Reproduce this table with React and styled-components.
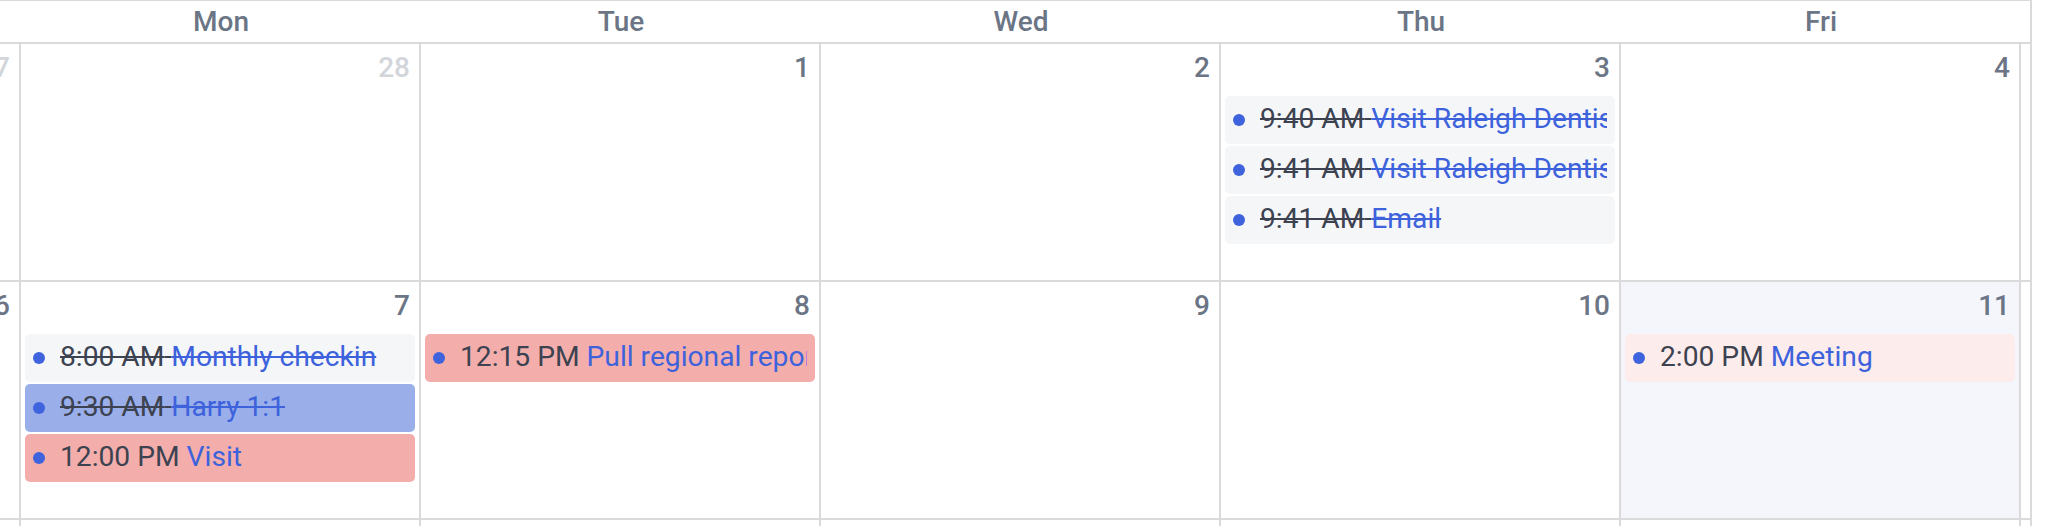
import styled, { createGlobalStyle } from "styled-components";

const GlobalStyle = createGlobalStyle`
    body {
        margin: 0;
        background: #ffffff;
        overflow: hidden;
        font-family: Roboto, "Liberation Sans", sans-serif;
    }
`;

const Frame = styled.div`
    width: 2032px;
    box-sizing: border-box;
    border-top: 1px solid #dadada;
    border-right: 2px solid #dadada;
    overflow: hidden;
`;

// the month grid is scrolled sideways: Sunday sits mostly off the left edge
const Board = styled.div`
    width: 2800px;
    margin-left: -379px;
`;

const HeaderRow = styled.div`
    display: grid;
    grid-template-columns: repeat(7, 400px);
    height: 43px;
    box-sizing: border-box;
    border-bottom: 2px solid #dadada;
`;

const HeadCell = styled.div`
    display: flex;
    align-items: center;
    justify-content: center;
    font-size: 28px;
    font-weight: 500;
    color: #6b7585;
`;

const WeekRow = styled.div`
    display: grid;
    grid-template-columns: repeat(7, 400px);
    height: 238px;
    box-sizing: border-box;
    border-bottom: 2px solid #dadada;
`;

const DayCell = styled.div`
    box-sizing: border-box;
    border-right: 2px solid #dadada;
    padding: 7px 4px 0;
    background: ${({ $today }) => ($today ? "#f4f6fc" : "transparent")};
    display: flex;
    flex-direction: column;
    min-width: 0;
`;

const DayNum = styled.div`
    text-align: right;
    padding-right: 5px;
    font-size: 28px;
    line-height: 33px;
    font-weight: 500;
    color: ${({ $muted }) => ($muted ? "#d2d5da" : "#6b7585")};
`;

const EventList = styled.div`
    display: flex;
    flex-direction: column;
    gap: 2px;
    margin-top: 12px;
`;

const tones = {
    done: "#f5f6f8",
    blue: "#9aafea",
    red: "#f3aeac",
    pink: "#fcecec",
};

const Event = styled.div`
    height: 48px;
    box-sizing: border-box;
    border-radius: 5px;
    padding: 0 8px;
    display: flex;
    align-items: center;
    gap: 15px;
    background: ${({ $tone }) => tones[$tone]};
    min-width: 0;
`;

const Dot = styled.span`
    flex: none;
    width: 12px;
    height: 12px;
    border-radius: 50%;
    background: #3f63dd;
`;

const Label = styled.div`
    flex: 1;
    min-width: 0;
    overflow: hidden;
    white-space: nowrap;
    font-size: 28.2px;
    line-height: 33px;
    padding-bottom: 4px;
`;

const Time = styled.span`
    color: #3c4250;
    text-decoration: ${({ $done }) => ($done ? "line-through" : "none")};
`;

const Title = styled.span`
    color: #3d62dc;
    text-decoration: ${({ $done }) => ($done ? "line-through" : "none")};
`;

const days = ["Sun", "Mon", "Tue", "Wed", "Thu", "Fri", "Sat"];

const weeks = [
    [
        { n: 27, muted: true },
        { n: 28, muted: true },
        { n: 1 },
        { n: 2 },
        {
            n: 3,
            events: [
                { time: "9:40 AM", title: "Visit Raleigh Dentist", tone: "done", done: true },
                { time: "9:41 AM", title: "Visit Raleigh Dentist", tone: "done", done: true },
                { time: "9:41 AM", title: "Email", tone: "done", done: true },
            ],
        },
        { n: 4 },
        { n: 5 },
    ],
    [
        { n: 6 },
        {
            n: 7,
            events: [
                { time: "8:00 AM", title: "Monthly checkin", tone: "done", done: true },
                { time: "9:30 AM", title: "Harry 1:1", tone: "blue", done: true },
                { time: "12:00 PM", title: "Visit", tone: "red" },
            ],
        },
        {
            n: 8,
            events: [{ time: "12:15 PM", title: "Pull regional report", tone: "red" }],
        },
        { n: 9 },
        { n: 10 },
        {
            n: 11,
            today: true,
            events: [{ time: "2:00 PM", title: "Meeting", tone: "pink" }],
        },
        { n: 12 },
    ],
    [
        { n: 13 },
        { n: 14 },
        { n: 15 },
        { n: 16 },
        { n: 17 },
        { n: 18 },
        { n: 19 },
    ],
];

export default function App() {
    return (
        <>
            <GlobalStyle />
            <Frame>
                <Board>
                    <HeaderRow>
                        {days.map((d) => (
                            <HeadCell key={d}>{d}</HeadCell>
                        ))}
                    </HeaderRow>
                    {weeks.map((week, i) => (
                        <WeekRow key={i}>
                            {week.map((day) => (
                                <DayCell key={day.n} $today={day.today}>
                                    <DayNum $muted={day.muted}>{day.n}</DayNum>
                                    {day.events && (
                                        <EventList>
                                            {day.events.map((ev, j) => (
                                                <Event key={j} $tone={ev.tone}>
                                                    <Dot />
                                                    <Label>
                                                        <Time $done={ev.done}>{ev.time} </Time>
                                                        <Title $done={ev.done}>{ev.title}</Title>
                                                    </Label>
                                                </Event>
                                            ))}
                                        </EventList>
                                    )}
                                </DayCell>
                            ))}
                        </WeekRow>
                    ))}
                </Board>
            </Frame>
        </>
    );
}
